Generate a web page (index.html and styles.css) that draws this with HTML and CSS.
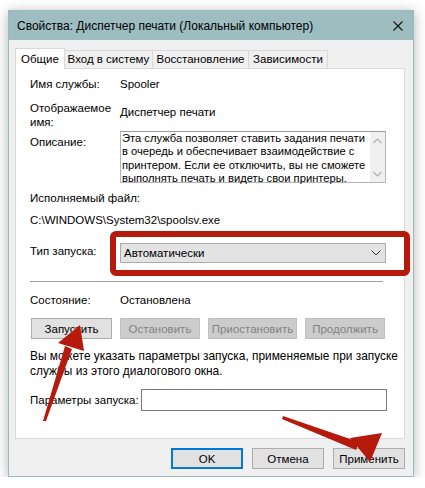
FILE: index.html
```html
<!DOCTYPE html>
<html lang="ru">
<head>
  <meta charset="UTF-8" />
  <title>Свойства: Диспетчер печати</title>
  <link rel="stylesheet" href="styles.css">
</head>
<body>

  <div class="window">
    <div class="titlebar">
      <span class="title">Свойства: Диспетчер печати (Локальный компьютер)</span>
      <svg class="close" width="10" height="10" viewBox="0 0 10 10">
        <path d="M0.5 0.5 L9.5 9.5 M9.5 0.5 L0.5 9.5" stroke="#111" stroke-width="1.1" fill="none"/>
      </svg>
    </div>

    <div class="client">
      <div class="tabs">
        <div class="tab active tab-general">Общие</div>
        <div class="tab tab-logon">Вход в систему</div>
        <div class="tab tab-recovery">Восстановление</div>
        <div class="tab tab-deps">Зависимости</div>
      </div>

      <div class="panel">
        <div class="row row-name">
          <div class="label">Имя службы:</div>
          <div class="value">Spooler</div>
        </div>

        <div class="row row-display">
          <div class="label">Отображаемое<br>имя:</div>
          <div class="value">Диспетчер печати</div>
        </div>

        <div class="row row-desc">
          <div class="label">Описание:</div>
          <div class="desc-box">
            <div class="desc-text">Эта служба позволяет ставить задания печати<br>в очередь и обеспечивает взаимодействие с<br>принтером. Если ее отключить, вы не сможете<br>выполнять печать и видеть свои принтеры.</div>
            <div class="scrollbar">
              <svg width="15" height="12" viewBox="0 0 15 12"><polyline points="3.5,8 7.5,4 11.5,8" stroke="#b0b0b0" stroke-width="1.2" fill="none"/></svg>
              <svg width="15" height="12" viewBox="0 0 15 12"><polyline points="3.5,4 7.5,8 11.5,4" stroke="#b0b0b0" stroke-width="1.2" fill="none"/></svg>
            </div>
          </div>
        </div>

        <div class="line line-exe">Исполняемый файл:</div>
        <div class="line line-path">C:\WINDOWS\System32\spoolsv.exe</div>

        <div class="row row-start">
          <div class="label">Тип запуска:</div>
          <div class="select">
            <span>Автоматически</span>
            <svg width="10" height="6" viewBox="0 0 10 6"><polyline points="0.5,0.5 5,5 9.5,0.5" stroke="#333" stroke-width="1" fill="none"/></svg>
          </div>
        </div>

        <div class="separator"></div>

        <div class="row row-state">
          <div class="label">Состояние:</div>
          <div class="value">Остановлена</div>
        </div>

        <div class="btn-row">
          <button class="btn btn-start">Запустить</button>
          <button class="btn btn-off btn-stop">Остановить</button>
          <button class="btn btn-off btn-pause">Приостановить</button>
          <button class="btn btn-off btn-resume">Продолжить</button>
        </div>

        <p class="hint">Вы можете указать параметры запуска, применяемые при запуске<br>службы из этого диалогового окна.</p>

        <div class="row row-params">
          <div class="label label-params">Параметры запуска:</div>
          <div class="input"></div>
        </div>
      </div>

      <div class="footer">
        <button class="btn btn-dlg btn-ok">OK</button>
        <button class="btn btn-dlg">Отмена</button>
        <button class="btn btn-dlg">Применить</button>
      </div>
    </div>
  </div>

  <!-- annotations drawn over the screenshot -->
  <svg class="marks" width="425" height="488" viewBox="0 0 425 488">
    <rect x="113" y="234" width="294" height="39" rx="3" fill="none" stroke="#b51a0c" stroke-width="6"/>
    <polygon points="43,421 46,421 72,349 65,346" fill="#b51a0c"/>
    <polygon points="58,343 80,325 84,351" fill="#b51a0c"/>
    <polygon points="283,416 282,419 356,450 359,442" fill="#b51a0c"/>
    <polygon points="350,438 382,433 370,462" fill="#b51a0c"/>
  </svg>

</body>
</html>
```

FILE: styles.css
```css
* {
  box-sizing: border-box;
}

body {
  margin: 0;
  background: #fff;
  font-family: "Liberation Sans", Arial, sans-serif;
  font-size: 11.5px;
  color: #000;
}

.window {
  margin: 10px 0 0 8px;
  width: 406px;
  border: 1px solid #9ab9be;
  background: #f0f0f0;
  box-shadow: 0 2px 12px rgba(0, 0, 0, 0.3);
}

.titlebar {
  height: 29px;
  background: #9dbdc1;
  display: flex;
  align-items: center;
  justify-content: space-between;
  padding: 0 10px 0 8px;
}

.title {
  font-size: 12px;
}

.client {
  padding: 8px 8px 7px 6px;
}

.tabs {
  display: flex;
  align-items: flex-end;
  height: 20px;
}

.tab {
  height: 18px;
  border: 1px solid #d9d9d9;
  border-bottom: none;
  border-left: none;
  background: #f0f0f0;
  text-align: center;
  line-height: 17px;
}

.tab.active {
  height: 21px;
  margin-bottom: -1px;
  border-left: 1px solid #d9d9d9;
  background: #fff;
  position: relative;
  z-index: 1;
  line-height: 20px;
}

.tab-general { width: 50px; }
.tab-logon { width: 88px; }
.tab-recovery { width: 96px; }
.tab-deps { width: 79px; }

.panel {
  height: 371px;
  border: 1px solid #d9d9d9;
  background: #fff;
  padding: 7px 0 0 14px;
}

.row {
  display: flex;
}

.label {
  width: 90px;
  flex-shrink: 0;
  line-height: 16px;
}

.value {
  line-height: 16px;
}

.row-display {
  margin-top: 9px;
}

.row-display .label {
  line-height: 14px;
}

.row-display .value {
  padding-top: 3px;
}

.row-desc {
  margin-top: 2px;
}

.row-desc .label {
  padding-top: 3px;
}

.desc-box {
  width: 266px;
  height: 52px;
  border: 1px solid #b4b4b4;
  border-top-color: #9a9a9a;
  display: flex;
  justify-content: space-between;
}

.desc-text {
  padding-left: 1px;
  font-size: 11.2px;
  line-height: 13.4px;
  white-space: nowrap;
}

.scrollbar {
  width: 15px;
  background: #f0f0f0;
  display: flex;
  flex-direction: column;
  justify-content: space-between;
  padding: 3px 0 2px;
}

.line {
  line-height: 16px;
}

.line-exe {
  margin-top: 7px;
}

.line-path {
  margin-top: 6px;
}

.row-start {
  margin-top: 15px;
}

.select {
  width: 266px;
  height: 20px;
  background: #e3e3e3;
  border: 1px solid #acacac;
  display: flex;
  align-items: center;
  justify-content: space-between;
  padding: 0 4px 0 3px;
}

.separator {
  margin-top: 18px;
  width: 353px;
  height: 1px;
  background: #a0a0a0;
}

.row-state {
  margin-top: 10px;
}

.btn-row {
  display: flex;
  gap: 8px;
  margin: 10px 0 0 1px;
}

.btn {
  height: 21px;
  padding: 0;
  background: #e1e1e1;
  border: 1px solid #adadad;
  font-family: inherit;
  font-size: 11.5px;
  color: #000;
}

.btn-start { width: 81px; }
.btn-stop { width: 80px; }
.btn-pause { width: 89px; }
.btn-resume { width: 80px; }

.btn-off {
  background: #cccccc;
  border-color: #bfbfbf;
  color: #838383;
}

.hint {
  margin: 10px 0 0;
  font-size: 11.9px;
  line-height: 15px;
}

.row-params {
  margin-top: 10px;
  align-items: center;
}

.label-params {
  width: 111px;
}

.input {
  width: 246px;
  height: 22px;
  border: 1px solid #7a7a7a;
  background: #fff;
}

.footer {
  display: flex;
  justify-content: flex-end;
  gap: 9px;
  margin-top: 9px;
}

.btn-dlg {
  width: 72px;
}

.btn-ok {
  border: 2px solid #0078d7;
}

.marks {
  position: absolute;
  top: 0;
  left: 0;
  pointer-events: none;
}
```
